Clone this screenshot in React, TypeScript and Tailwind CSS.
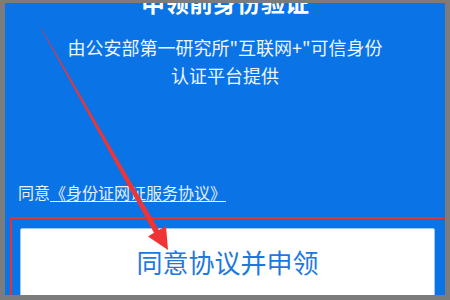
import * as React from "react";

const cjk = { fontFamily: '"Noto Sans CJK SC", "Noto Sans", sans-serif' };

function Arrow() {
  return (
    <svg
      className="pointer-events-none absolute left-0 top-0"
      width="450"
      height="300"
      viewBox="0 0 450 300"
    >
      <polygon
        points="40.6,27.8 41.4,28.2 159,230 166,226 168,250 148,236.5 154,232.8"
        fill="#ee3434"
      />
    </svg>
  );
}

export default function App() {
  return (
    <div className="relative h-[300px] w-[450px] overflow-hidden bg-[#7c7c7c]" style={cjk}>
      <div className="ml-[5px] mt-[3px] h-[292px] w-[440px] overflow-hidden bg-[#0a74e6]">
        <div className="mt-[-15px] text-center text-[24px] font-bold leading-[28px] text-white">
          申领前身份验证
        </div>
        <div className="mt-[17px] text-center text-[18px] leading-[28px] text-[#eef5ff]">
          由公安部第一研究所"互联网+"可信身份
          <br />
          认证平台提供
        </div>
        <div className="mt-[92px] pl-[13px] text-[16px] leading-[22px] text-[#e6f0ff]">
          同意<span className="underline underline-offset-2">《身份证网证服务协议》</span>
        </div>
        <div className="ml-[5px] mr-[-6px] mt-[14px] border-2 border-[#e8322e] pb-[20px] pl-[8px] pr-[14px] pt-[9px]">
          <div className="flex h-[70px] items-center justify-center rounded-[2px] border border-[#9cc8f5] bg-white pb-[4px] text-[26px] text-[#1d78e0]">
            同意协议并申领
          </div>
        </div>
      </div>
      <Arrow />
    </div>
  );
}
